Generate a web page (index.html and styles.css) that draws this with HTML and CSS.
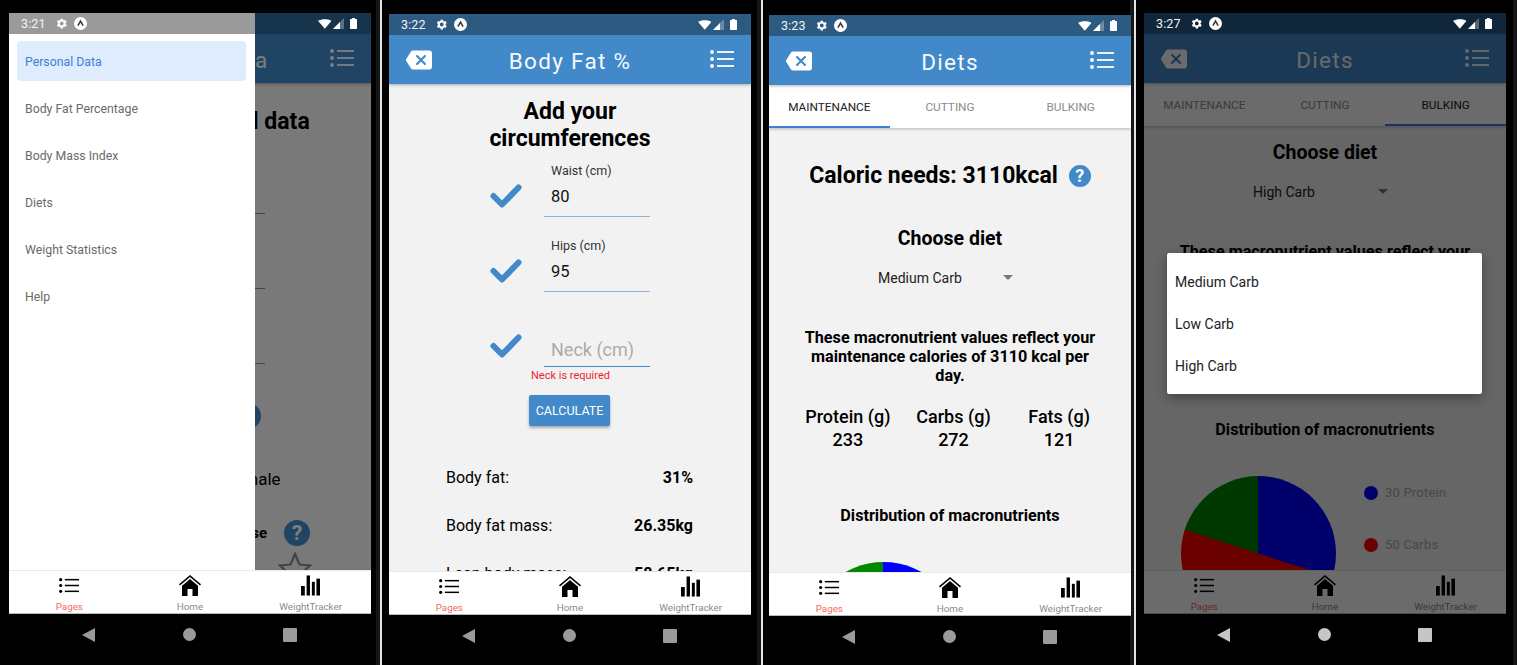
FILE: index.html
```html
<!DOCTYPE html>
<html lang="en">
<head>
<meta charset="utf-8">
<title>Fitness app screens</title>
<link rel="stylesheet" href="styles.css">
</head>
<body>
<svg class="defs" width="0" height="0" aria-hidden="true">
  <defs>
    <symbol id="gear" viewBox="0 0 24 24"><path d="M19.4 13a7.6 7.6 0 0 0 0-2l2.2-1.7-2.2-3.7-2.6 1a7.5 7.5 0 0 0-1.7-1L14.7 3h-4.3L10 5.6a7.5 7.5 0 0 0-1.7 1l-2.6-1-2.2 3.7L5.600 11a7.6 7.600 0 0 0 0 2l-2.100 1.700 2.200 3.700 2.600-1a7.500 7.500 0 0 0 1.700 1l.4 2.600h4.300l.4-2.600a7.500 7.500 0 0 0 1.700-1l2.600 1 2.200-3.700zM12.500 15.500a3.500 3.500 0 1 1 0-7 3.500 3.500 0 0 1 0 7z" fill="currentColor"/></symbol>
    <symbol id="applogo" viewBox="0 0 14 14"><circle cx="7" cy="7" r="7" fill="currentColor"/><path d="M4.200 9.300 7 4.400l2.800 4.900" fill="none" stroke="#3a3a3a" stroke-width="1.700"/></symbol>
    <symbol id="wifi" viewBox="0 0 14 10"><path d="M0 1.700C2 .5 4.400 0 7 0s5 .5 7 1.700L7 10z" fill="currentColor"/></symbol>
    <symbol id="signal" viewBox="0 0 11 11"><path d="M11 0v11H0z" fill="currentColor" opacity=".3"/><path d="M7 4v7H0z" fill="currentColor"/></symbol>
    <symbol id="battery" viewBox="0 0 7 11"><path d="M2 0h3v1h1.300c.4 0 .7.300.7.700v8.600c0 .4-.3.700-.7.700H.7c-.4 0-.7-.3-.7-.7V1.700C0 1.300.3 1 .7 1H2z" fill="currentColor"/></symbol>
    <symbol id="list" viewBox="0 0 24 18"><g fill="currentColor"><circle cx="2" cy="2" r="1.900"/><circle cx="2" cy="9" r="1.900"/><circle cx="2" cy="16" r="1.900"/><rect x="7" y="1.100" width="17" height="1.800"/><rect x="7" y="8.100" width="17" height="1.800"/><rect x="7" y="15.100" width="17" height="1.800"/></g></symbol>
    <symbol id="back" viewBox="0 0 26 20"><path d="M7 .5h16.500c1.400 0 2.500 1.100 2.500 2.500v14c0 1.400-1.100 2.500-2.500 2.500H7c-.8 0-1.500-.4-2-1L.4 11.300c-.6-.8-.6-1.800 0-2.600L5 1.500c.5-.6 1.200-1 2-1z" fill="#fff"/><path d="m11 6 8 8m0-8-8 8" stroke="#4189c9" stroke-width="2.100" fill="none" stroke-linecap="round"/></symbol>
    <symbol id="check" viewBox="0 0 32 24"><path d="m3.500 12 8.500 8.500L28.500 3.500" fill="none" stroke="currentColor" stroke-width="6" stroke-linecap="round" stroke-linejoin="round"/></symbol>
    <symbol id="home" viewBox="0 0 22 21"><path d="M11 0 0 9.200l1 1.200L11 2.100l10 8.300 1-1.200z" fill="currentColor"/><path d="M11 4 3 10.700V21h5.500v-7h5v7H19V10.700z" fill="currentColor"/></symbol>
    <symbol id="bars" viewBox="0 0 18 19"><g fill="currentColor"><rect x="0" y="10" width="3.600" height="9"/><rect x="5.300" y="0" width="3.200" height="19"/><rect x="10.300" y="6" width="2.800" height="13"/><rect x="14.600" y="3" width="3.400" height="16"/></g></symbol>
    <symbol id="star" viewBox="0 0 34 32"><path d="m17 2 4.500 10.500L32 13.500l-8 7.500 2.400 11L17 26.500 7.600 32 10 21l-8-7.500 10.500-1z" fill="none" stroke="currentColor" stroke-width="2.200"/></symbol>
    <symbol id="star-filled" viewBox="0 0 34 32"><path d="m17 2 4.500 10.500L32 13.500l-8 7.500 2.400 11L17 26.500 7.600 32 10 21l-8-7.500 10.500-1z" fill="currentColor"/></symbol>
  </defs>
</svg>

<main class="phones">

  <section class="phone phone--a">
    <div class="screen">
      <div class="status status--drawer">
        <span class="status-time">3:21</span>
        <svg class="ic-gear"><use href="#gear"/></svg>
        <svg class="ic-logo"><use href="#applogo"/></svg>
        <span class="status-right">
          <svg class="ic-wifi"><use href="#wifi"/></svg>
          <svg class="ic-signal"><use href="#signal"/></svg>
          <svg class="ic-battery"><use href="#battery"/></svg>
        </span>
      </div>
      <header class="appbar appbar--a">
        <svg class="ic-back"><use href="#back"/></svg>
        <h1 class="appbar-title">Personal Data</h1>
        <svg class="ic-list"><use href="#list"/></svg>
      </header>
      <div class="content pd">
        <h2 class="form-title pd-title">Add your personal data</h2>
        <div class="pd-line"></div>
        <div class="pd-line"></div>
        <div class="pd-line"></div>
        <div class="pd-dot"></div>
        <div class="pd-gender">Female</div>
        <div class="pd-exercise">
          <span class="pd-exercise-text">Exercise</span>
          <span class="help help--lg">?</span>
        </div>
        <div class="pd-stars">
          <svg class="ic-star-f"><use href="#star-filled"/></svg>
          <svg class="ic-star"><use href="#star"/></svg>
        </div>
      </div>
      <div class="scrim scrim--a"></div>
      <nav class="drawer">
        <a class="drawer-item drawer-item--active">Personal Data</a>
        <a class="drawer-item">Body Fat Percentage</a>
        <a class="drawer-item">Body Mass Index</a>
        <a class="drawer-item">Diets</a>
        <a class="drawer-item">Weight Statistics</a>
        <a class="drawer-item">Help</a>
      </nav>
      <footer class="tabbar tabbar--top">
        <div class="tabbar-item tabbar-item--active"><svg class="ic-tab-list"><use href="#list"/></svg><span>Pages</span></div>
        <div class="tabbar-item"><svg class="ic-tab-home"><use href="#home"/></svg><span>Home</span></div>
        <div class="tabbar-item"><svg class="ic-tab-bars"><use href="#bars"/></svg><span>WeightTracker</span></div>
      </footer>
    </div>
    <div class="sysnav">
      <span class="sys-back"></span><span class="sys-home"></span><span class="sys-recent"></span>
    </div>
  </section>

  <section class="phone phone--b">
    <div class="screen">
      <div class="status">
        <span class="status-time">3:22</span>
        <svg class="ic-gear"><use href="#gear"/></svg>
        <svg class="ic-logo"><use href="#applogo"/></svg>
        <span class="status-right">
          <svg class="ic-wifi"><use href="#wifi"/></svg>
          <svg class="ic-signal"><use href="#signal"/></svg>
          <svg class="ic-battery"><use href="#battery"/></svg>
        </span>
      </div>
      <header class="appbar">
        <svg class="ic-back"><use href="#back"/></svg>
        <h1 class="appbar-title">Body Fat %</h1>
        <svg class="ic-list"><use href="#list"/></svg>
      </header>
      <div class="content bf">
        <h2 class="form-title">Add your<br>circumferences</h2>
        <div class="field-row">
          <svg class="ic-check"><use href="#check"/></svg>
          <div class="field">
            <label class="field-label">Waist (cm)</label>
            <div class="field-value">80</div>
          </div>
        </div>
        <div class="field-row">
          <svg class="ic-check"><use href="#check"/></svg>
          <div class="field">
            <label class="field-label">Hips (cm)</label>
            <div class="field-value">95</div>
          </div>
        </div>
        <div class="field-row">
          <svg class="ic-check"><use href="#check"/></svg>
          <div class="field field--empty">
            <div class="field-placeholder">Neck (cm)</div>
          </div>
        </div>
        <div class="field-error">Neck is required</div>
        <button class="btn" type="button">CALCULATE</button>
        <dl class="results">
          <div class="result"><dt>Body fat:</dt><dd>31%</dd></div>
          <div class="result"><dt>Body fat mass:</dt><dd>26.35kg</dd></div>
          <div class="result"><dt>Lean body mass:</dt><dd>58.65kg</dd></div>
        </dl>
      </div>
      <footer class="tabbar">
        <div class="tabbar-item tabbar-item--active"><svg class="ic-tab-list"><use href="#list"/></svg><span>Pages</span></div>
        <div class="tabbar-item"><svg class="ic-tab-home"><use href="#home"/></svg><span>Home</span></div>
        <div class="tabbar-item"><svg class="ic-tab-bars"><use href="#bars"/></svg><span>WeightTracker</span></div>
      </footer>
    </div>
    <div class="sysnav">
      <span class="sys-back"></span><span class="sys-home"></span><span class="sys-recent"></span>
    </div>
  </section>

  <section class="phone phone--c">
    <div class="screen">
      <div class="status">
        <span class="status-time">3:23</span>
        <svg class="ic-gear"><use href="#gear"/></svg>
        <svg class="ic-logo"><use href="#applogo"/></svg>
        <span class="status-right">
          <svg class="ic-wifi"><use href="#wifi"/></svg>
          <svg class="ic-signal"><use href="#signal"/></svg>
          <svg class="ic-battery"><use href="#battery"/></svg>
        </span>
      </div>
      <header class="appbar">
        <svg class="ic-back"><use href="#back"/></svg>
        <h1 class="appbar-title">Diets</h1>
        <svg class="ic-list"><use href="#list"/></svg>
      </header>
      <div class="tabs">
        <div class="tab tab--active">Maintenance</div>
        <div class="tab">Cutting</div>
        <div class="tab">Bulking</div>
      </div>
      <div class="content diet">
        <div class="caloric">
          <h2 class="caloric-title">Caloric needs: 3110kcal</h2>
          <span class="help">?</span>
        </div>
        <h3 class="choose">Choose diet</h3>
        <div class="dropdown"><span>Medium Carb</span><i class="dropdown-arrow"></i></div>
        <p class="macro-text">These macronutrient values reflect your maintenance calories of 3110 kcal per day.</p>
        <div class="macros">
          <div class="macro"><div>Protein (g)</div><div>233</div></div>
          <div class="macro"><div>Carbs (g)</div><div>272</div></div>
          <div class="macro"><div>Fats (g)</div><div>121</div></div>
        </div>
        <h3 class="dist-title">Distribution of macronutrients</h3>
        <div class="chart">
          <div class="pie"></div>
          <ul class="legend">
            <li class="legend-item"><i class="legend-dot legend-dot--blue"></i>30 Protein</li>
            <li class="legend-item"><i class="legend-dot legend-dot--red"></i>50 Carbs</li>
          </ul>
        </div>
      </div>
      <footer class="tabbar">
        <div class="tabbar-item tabbar-item--active"><svg class="ic-tab-list"><use href="#list"/></svg><span>Pages</span></div>
        <div class="tabbar-item"><svg class="ic-tab-home"><use href="#home"/></svg><span>Home</span></div>
        <div class="tabbar-item"><svg class="ic-tab-bars"><use href="#bars"/></svg><span>WeightTracker</span></div>
      </footer>
    </div>
    <div class="sysnav">
      <span class="sys-back"></span><span class="sys-home"></span><span class="sys-recent"></span>
    </div>
  </section>

  <section class="phone phone--d">
    <div class="screen">
      <div class="status status--dim">
        <span class="status-time">3:27</span>
        <svg class="ic-gear"><use href="#gear"/></svg>
        <svg class="ic-logo"><use href="#applogo"/></svg>
        <span class="status-right">
          <svg class="ic-wifi"><use href="#wifi"/></svg>
          <svg class="ic-signal"><use href="#signal"/></svg>
          <svg class="ic-battery"><use href="#battery"/></svg>
        </span>
      </div>
      <header class="appbar">
        <svg class="ic-back"><use href="#back"/></svg>
        <h1 class="appbar-title">Diets</h1>
        <svg class="ic-list"><use href="#list"/></svg>
      </header>
      <div class="tabs">
        <div class="tab">Maintenance</div>
        <div class="tab">Cutting</div>
        <div class="tab tab--active">Bulking</div>
      </div>
      <div class="content diet diet--scrolled">
        <h3 class="choose">Choose diet</h3>
        <div class="dropdown"><span>High Carb</span><i class="dropdown-arrow"></i></div>
        <p class="macro-text">These macronutrient values reflect your maintenance calories of 3110 kcal per day.</p>
        <div class="macros">
          <div class="macro"><div>Protein (g)</div><div>233</div></div>
          <div class="macro"><div>Carbs (g)</div><div>272</div></div>
          <div class="macro"><div>Fats (g)</div><div>121</div></div>
        </div>
        <h3 class="dist-title">Distribution of macronutrients</h3>
        <div class="chart">
          <div class="pie"></div>
          <ul class="legend">
            <li class="legend-item"><i class="legend-dot legend-dot--blue"></i>30 Protein</li>
            <li class="legend-item"><i class="legend-dot legend-dot--red"></i>50 Carbs</li>
          </ul>
        </div>
      </div>
      <footer class="tabbar">
        <div class="tabbar-item tabbar-item--active"><svg class="ic-tab-list"><use href="#list"/></svg><span>Pages</span></div>
        <div class="tabbar-item"><svg class="ic-tab-home"><use href="#home"/></svg><span>Home</span></div>
        <div class="tabbar-item"><svg class="ic-tab-bars"><use href="#bars"/></svg><span>WeightTracker</span></div>
      </footer>
      <div class="scrim scrim--d"></div>
      <ul class="menu">
        <li class="menu-item">Medium Carb</li>
        <li class="menu-item">Low Carb</li>
        <li class="menu-item">High Carb</li>
      </ul>
    </div>
    <div class="sysnav sysnav--light">
      <span class="sys-back"></span><span class="sys-home"></span><span class="sys-recent"></span>
    </div>
  </section>

</main>
</body>
</html>
```
FILE: styles.css
```css
* { box-sizing: border-box; }

html, body {
  margin: 0;
  height: 100%;
  background: #000;
  overflow: hidden;
}

body {
  font-family: Roboto, "Liberation Sans", sans-serif;
  color: #000;
}

h1, h2, h3, p, ul, dl, dd { margin: 0; padding: 0; }
ul { list-style: none; }

.defs { position: absolute; }

.phones {
  display: flex;
  height: 665px;
}

.phone {
  height: 665px;
  flex: none;
  box-shadow: inset -4px 0 0 #161616;
}

.phone--a { width: 382px; padding: 13px 0 0 9px; border-right: 2px solid #e4e4e4; }
.phone--b { width: 381px; padding: 14px 0 0 7px; border-right: 2px solid #e4e4e4; }
.phone--c { width: 373px; padding: 15px 0 0 6px; border-right: 2px solid #e4e4e4; }
.phone--d { width: 381px; padding: 13px 0 0 8px; }

.screen {
  position: relative;
  width: 362px;
  height: 601px;
  display: flex;
  flex-direction: column;
  overflow: hidden;
  background: #f2f2f2;
}

/* status bar */
.status {
  position: relative;
  z-index: 4;
  flex: none;
  height: 21px;
  display: flex;
  align-items: center;
  padding: 0 14px 0 12px;
  background: #2d5a80;
  color: #fff;
}

.status--drawer {
  background: linear-gradient(to right, #9a9a9a 246px, #17344d 246px);
}

.status--dim { background: #10263a; }

.status-time {
  font-size: 12.500px;
  width: 24px;
  letter-spacing: .1px;
  color: #f4f4f4;
}

.ic-gear { width: 13px; height: 13px; margin-left: 10px; }
.ic-logo { width: 13px; height: 13px; margin-left: 6px; }

.status-right {
  margin-left: auto;
  display: flex;
  align-items: center;
}

.ic-wifi { width: 13.500px; height: 10px; }
.ic-signal { width: 11px; height: 11px; margin-left: 2px; }
.ic-battery { width: 7px; height: 11px; margin-left: 6px; }

/* app bar */
.appbar {
  position: relative;
  z-index: 1;
  flex: none;
  height: 48.500px;
  display: flex;
  align-items: center;
  padding: 0 17px;
  background: #4189c9;
  color: #fff;
  box-shadow: 0 1px 3px rgba(0, 0, 0, .3);
}

.ic-back { width: 26px; height: 20px; margin-top: 1px; flex: none; }
.ic-list { width: 24px; height: 18px; margin-left: 2px; flex: none; color: #fff; }

.appbar-title {
  flex: 1;
  margin-top: 4px;
  text-align: center;
  font-size: 22.500px;
  font-weight: 400;
  letter-spacing: 1.300px;
  line-height: 28px;
  color: #f5f9fd;
}

.content {
  flex: 1;
  min-height: 0;
  overflow: hidden;
}

/* personal data (behind drawer) */
.pd { padding-top: 25px; }
.pd-line {
  width: 110px;
  height: 1px;
  margin: 0 0 74px 146px;
  background: #8a8a8a;
}
.pd-title + .pd-line { margin-top: 78px; }
.pd-dot {
  width: 26px;
  height: 26px;
  margin: -35px 0 0 226px;
  border-radius: 50%;
  background: #4189c9;
}
.pd-gender {
  margin: 38px 0 0 216px;
  font-size: 17px;
  line-height: 24px;
}
.pd-exercise {
  display: flex;
  align-items: center;
  margin: 29px 0 0 120px;
  gap: 17px;
}
.pd-exercise-text {
  width: 138px;
  text-align: right;
  font-size: 15px;
  font-weight: 700;
}
.pd-stars {
  display: flex;
  margin: 6px 0 0 215px;
  gap: 20px;
}
.ic-star, .ic-star-f { width: 34px; height: 32px; flex: none; }
.ic-star { color: #888; }
.ic-star-f { color: #4189c9; }

.help {
  display: inline-flex;
  align-items: center;
  justify-content: center;
  flex: none;
  width: 22px;
  height: 22px;
  border-radius: 50%;
  background: #4189c9;
  color: #fff;
  font-size: 18px;
  font-weight: 700;
}
.help--lg { width: 26px; height: 26px; font-size: 21px; }

/* scrim */
.scrim {
  position: absolute;
  inset: 0;
  z-index: 2;
}
.scrim--a { background: rgba(0, 0, 0, .5); }
.scrim--d { background: rgba(0, 0, 0, .58); }

/* drawer */
.drawer {
  position: absolute;
  z-index: 3;
  top: 21px;
  left: 0;
  bottom: 44px;
  width: 246px;
  padding: 7px 9px 0 8px;
  background: #fff;
  display: flex;
  flex-direction: column;
  gap: 7px;
}

.drawer-item {
  height: 40px;
  display: flex;
  align-items: center;
  padding: 2px 0 0 8px;
  border-radius: 4px;
  font-size: 12.300px;
  color: #6a6a6a;
}

.drawer-item--active {
  background: #deecfd;
  color: #3a7fd9;
}

/* bottom tabs */
.tabbar {
  position: relative;
  flex: none;
  height: 44px;
  display: grid;
  grid-template-columns: repeat(3, 1fr);
  background: #fff;
  border-top: 1px solid #e8e8e8;
  border-bottom: 1px solid #bbb;
}

.tabbar--top { z-index: 3; }

.tabbar-item {
  display: flex;
  flex-direction: column;
  align-items: center;
  padding-top: 4px;
  font-size: 9.800px;
  line-height: 13px;
  color: #8a8a8a;
}

.tabbar-item svg {
  flex: none;
  color: #000;
  margin-bottom: 4px;
}

.tabbar-item--active { color: #f4695f; }

.ic-tab-list { width: 20px; height: 21px; }
.ic-tab-home { width: 22px; height: 21px; }
.ic-tab-bars { width: 19px; height: 21px; }

/* system nav */
.sysnav {
  position: relative;
  height: 50px;
  color: #9a9a9a;
}

.sysnav span {
  position: absolute;
  top: 14px;
}

.sysnav--light { color: #c6c6c6; }

.sys-back {
  left: 73px;
  width: 0;
  height: 0;
  border-top: 7px solid transparent;
  border-bottom: 7px solid transparent;
  border-right: 13px solid currentColor;
}

.sys-home {
  left: 174px;
  width: 13px;
  height: 13px;
  border-radius: 50%;
  background: currentColor;
}

.sys-recent {
  left: 274px;
  width: 14px;
  height: 14px;
  border-radius: 1px;
  background: currentColor;
}

/* body fat form */
.bf { padding-top: 14px; }

.form-title {
  text-align: center;
  font-size: 23px;
  line-height: 27px;
  font-weight: 700;
}

.field-row {
  display: flex;
  justify-content: center;
  align-items: flex-end;
  gap: 22px;
  height: 57px;
  margin-bottom: 18px;
}

.form-title + .field-row { margin-top: 8px; }

.ic-check {
  width: 32px;
  height: 24px;
  margin-bottom: 9px;
  flex: none;
  color: #4189c9;
}

.field {
  width: 106px;
  height: 57px;
  padding: 3px 0 0 7px;
  border-bottom: 1px solid #8fb2d6;
}

.field-label {
  display: block;
  font-size: 12.500px;
  line-height: 15px;
  color: #333;
}

.field-value {
  margin-top: 9px;
  font-size: 16.500px;
  line-height: 20px;
  color: #111;
}

.field--empty { border-bottom-color: #4189c9; }

.field-placeholder {
  margin-top: 25px;
  font-size: 18px;
  line-height: 24px;
  color: #ababab;
}

.field-error {
  margin: -16px 0 0 142px;
  font-size: 11px;
  line-height: 14px;
  color: #f01f2e;
}

.btn {
  display: block;
  width: 81px;
  height: 31px;
  margin: 12px auto 0 140px;
  padding: 0;
  border: 0;
  border-radius: 2px;
  background: #4189c9;
  color: #fff;
  font: 400 12.500px Roboto, "Liberation Sans", sans-serif;
  box-shadow: 0 2px 3px rgba(0, 0, 0, .3);
}

.results {
  margin-top: 28px;
  padding: 0 58px 0 57px;
}

.result {
  display: flex;
  justify-content: space-between;
  align-items: center;
  height: 48px;
  font-size: 16px;
}

.result dd { font-weight: 700; }

/* diets */
.tabs {
  position: relative;
  flex: none;
  height: 43px;
  display: grid;
  grid-template-columns: repeat(3, 1fr);
  background: #fff;
  box-shadow: 0 1px 3px rgba(0, 0, 0, .25);
}

.tab {
  display: flex;
  align-items: center;
  justify-content: center;
  padding-top: 4px;
  font-size: 11.800px;
  text-transform: uppercase;
  color: #8c8c8c;
  border-bottom: 2px solid transparent;
}

.tab--active {
  color: #222;
  border-bottom-color: #3a7fd9;
}

.diet { padding-top: 34px; }
.diet--scrolled { padding-top: 15px; }

.caloric {
  display: flex;
  justify-content: center;
  align-items: center;
  gap: 11px;
  height: 28px;
}

.caloric-title {
  font-size: 23px;
  font-weight: 700;
  line-height: 28px;
}

.choose {
  margin-top: 37px;
  text-align: center;
  font-size: 19.500px;
  font-weight: 700;
  line-height: 24px;
}

.diet--scrolled .choose { margin-top: 0; }

.dropdown {
  display: flex;
  align-items: center;
  justify-content: space-between;
  width: 135px;
  height: 20px;
  margin: 17px 0 0 109px;
  font-size: 14px;
  color: #222;
}

.dropdown-arrow {
  width: 0;
  height: 0;
  border-left: 5px solid transparent;
  border-right: 5px solid transparent;
  border-top: 5px solid #777;
}

.macro-text {
  margin-top: 40px;
  padding: 0 30px;
  text-align: center;
  font-size: 16.200px;
  font-weight: 700;
  line-height: 19px;
}

.macros {
  display: grid;
  grid-template-columns: repeat(3, 1fr);
  margin-top: 20px;
  padding: 0 19px 0 26px;
}

.macro {
  text-align: center;
  font-size: 18px;
  font-weight: 500;
  line-height: 23.500px;
}

.dist-title {
  margin-top: 54px;
  text-align: center;
  font-size: 16.200px;
  font-weight: 700;
  line-height: 20px;
}

.chart {
  display: flex;
  margin-top: 36px;
  padding-left: 37px;
}

.pie {
  flex: none;
  width: 155px;
  height: 155px;
  border-radius: 50%;
  background: conic-gradient(#00f 0 30%, #f00 0 80%, #080 0);
}

.legend {
  margin-left: 28px;
  padding-top: 7px;
}

.legend-item {
  display: flex;
  align-items: center;
  gap: 7px;
  height: 20px;
  margin-bottom: 32px;
  font-size: 13px;
  letter-spacing: .2px;
  color: #aaa;
}

.legend-dot {
  width: 14px;
  height: 14px;
  border-radius: 50%;
}

.legend-dot--blue { background: #00f; }
.legend-dot--red { background: #f00; }

/* dropdown menu */
.menu {
  position: absolute;
  z-index: 3;
  top: 240px;
  left: 23px;
  width: 315px;
  height: 141px;
  padding: 8px 0;
  border-radius: 2px;
  background: #fff;
  box-shadow: 0 4px 12px rgba(0, 0, 0, .35);
}

.menu-item {
  height: 42px;
  display: flex;
  align-items: center;
  padding-left: 8px;
  font-size: 14px;
  color: #222;
}
```
